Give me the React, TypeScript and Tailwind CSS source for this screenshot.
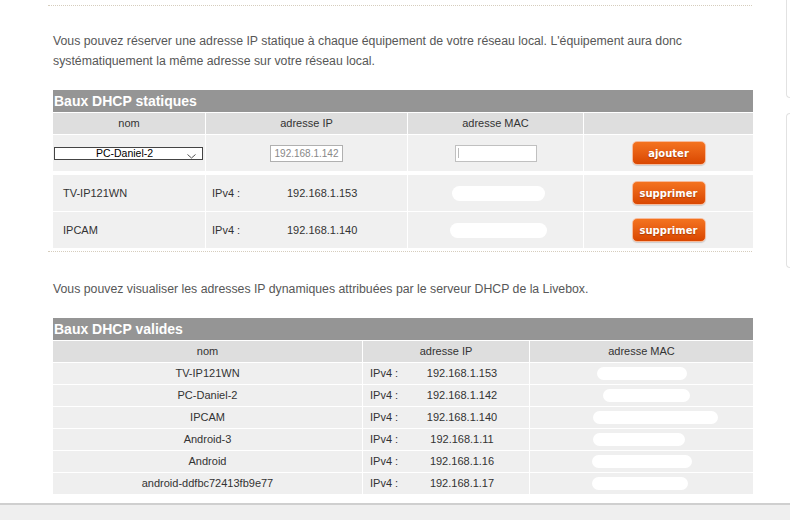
import React from "react";

const staticLeases = [
  { name: "TV-IP121WN", ip: "192.168.1.153", mac: "ml-[44px] w-[93px]" },
  { name: "IPCAM", ip: "192.168.1.140", mac: "ml-[42px] w-[97px]" },
];

const validLeases = [
  { name: "TV-IP121WN", ip: "192.168.1.153", mac: "ml-[67px] w-[90px]" },
  { name: "PC-Daniel-2", ip: "192.168.1.142", mac: "ml-[73px] w-[87px]" },
  { name: "IPCAM", ip: "192.168.1.140", mac: "ml-[63px] w-[125px]" },
  { name: "Android-3", ip: "192.168.1.11", mac: "ml-[63px] w-[92px]" },
  { name: "Android", ip: "192.168.1.16", mac: "ml-[62px] w-[100px]" },
  { name: "android-ddfbc72413fb9e77", ip: "192.168.1.17", mac: "ml-[62px] w-[96px]" },
];

function OrangeButton({ label }: { label: string }) {
  return (
    <button className="w-[74px] h-[24px] rounded-[5px] border border-[#f6bb9c] bg-gradient-to-b from-[#f4731f] to-[#d94600] text-white font-['DejaVu_Sans',sans-serif] font-bold text-[10px] [text-shadow:0_1px_1px_rgba(120,40,0,0.5)] shadow-[0_1px_1px_rgba(0,0,0,0.15)]">
      {label}
    </button>
  );
}

function App() {
  return (
    <div className="w-full h-[520px] bg-white flex flex-col overflow-hidden font-['Liberation_Sans',Arial,sans-serif]">
      <div className="flex-1 flex">
        {/* Main content */}
        <div className="pl-[53px] w-[753px] shrink-0 flex flex-col">
          <div className="mt-[5px] -ml-[5px] w-[704px] border-t border-dotted border-[#d6cdbd]" />

          <p className="mt-[25px] text-[12.3px] leading-[20px] text-[#575757]">
            Vous pouvez réserver une adresse IP statique à chaque équipement de votre réseau local. L'équipement aura donc
            <br />
            systématiquement la même adresse sur votre réseau local.
          </p>

          {/* Baux DHCP statiques */}
          <div className="mt-[19px] h-[22px] bg-[#959595] text-white font-bold text-[14px] leading-[22px] pl-px">
            Baux DHCP statiques
          </div>
          <div className="mt-px grid grid-cols-[152px_201px_175px_169px] gap-x-px text-[11px] text-[#333]">
            <div className="h-[21px] bg-[#dedede] flex items-center justify-center">nom</div>
            <div className="h-[21px] bg-[#dedede] flex items-center justify-center">adresse IP</div>
            <div className="h-[21px] bg-[#dedede] flex items-center justify-center">adresse MAC</div>
            <div className="h-[21px] bg-[#dedede]" />
          </div>
          <div className="mt-px grid grid-cols-[152px_201px_175px_169px] gap-x-px text-[11px] text-[#333]">
            <div className="h-[36px] bg-[#f0f0f0] flex items-center pl-px">
              <div className="w-[149px] h-[13px] bg-white border border-[#444] relative flex items-center justify-center text-[10.5px] text-black leading-none">
                <span className="-ml-[8px]">PC-Daniel-2</span>
                <svg className="absolute right-[6px] top-[6px]" width="9" height="5" viewBox="0 0 9 5">
                  <polyline points="0.5,0.5 4.5,4 8.5,0.5" fill="none" stroke="#555" strokeWidth="1" />
                </svg>
              </div>
            </div>
            <div className="h-[36px] bg-[#f0f0f0] flex items-center justify-center">
              <div className="w-[73px] h-[17px] bg-white border border-[#b0b0b0] flex items-center justify-center text-[10px] text-[#888]">
                192.168.1.142
              </div>
            </div>
            <div className="h-[36px] bg-[#f0f0f0] flex items-center justify-center">
              <div className="w-[82px] h-[17px] bg-white border border-[#c0c0c0] flex items-center pl-[2px]">
                <div className="w-px h-[10px] bg-[#bbb]" />
              </div>
            </div>
            <div className="h-[36px] bg-[#f0f0f0] flex items-center justify-center">
              <OrangeButton label="ajouter" />
            </div>
          </div>

          <div className="mt-[4px] flex flex-col gap-y-px">
            {staticLeases.map((lease) => (
              <div key={lease.name} className="grid grid-cols-[152px_201px_175px_169px] gap-x-px text-[11px] text-[#333]">
                <div className="h-[36px] bg-[#f0f0f0] flex items-center pl-[10px]">{lease.name}</div>
                <div className="h-[36px] bg-[#f0f0f0] flex items-center pl-[6px]">
                  <span className="w-[75px]">IPv4 :</span>
                  <span>{lease.ip}</span>
                </div>
                <div className="h-[36px] bg-[#f0f0f0] flex items-center">
                  <div className={`${lease.mac} h-[15px] rounded-full bg-white blur-[0.5px]`} />
                </div>
                <div className="h-[36px] bg-[#f0f0f0] flex items-center justify-center">
                  <OrangeButton label="supprimer" />
                </div>
              </div>
            ))}
          </div>

          <div className="mt-[3px] -ml-[5px] w-[704px] border-t border-dotted border-[#d6cdbd]" />

          <p className="mt-[27px] text-[12.3px] leading-[20px] text-[#575757]">
            Vous pouvez visualiser les adresses IP dynamiques attribuées par le serveur DHCP de la Livebox.
          </p>

          {/* Baux DHCP valides */}
          <div className="mt-[19px] h-[22px] bg-[#959595] text-white font-bold text-[14px] leading-[22px] pl-px">
            Baux DHCP valides
          </div>
          <div className="mt-px grid grid-cols-[309px_166px_223px] gap-x-px text-[11px] text-[#333]">
            <div className="h-[21px] bg-[#dedede] flex items-center justify-center">nom</div>
            <div className="h-[21px] bg-[#dedede] flex items-center justify-center">adresse IP</div>
            <div className="h-[21px] bg-[#dedede] flex items-center justify-center">adresse MAC</div>
          </div>
          {validLeases.map((lease) => (
            <div key={lease.name} className="mt-px grid grid-cols-[309px_166px_223px] gap-x-px text-[11px] text-[#333]">
              <div className="h-[21px] bg-[#efefef] flex items-center justify-center">{lease.name}</div>
              <div className="h-[21px] bg-[#efefef] flex items-center">
                <span className="w-[32px] pl-[7px] shrink-0 whitespace-nowrap">IPv4 :</span>
                <span className="flex-1 text-center">{lease.ip}</span>
              </div>
              <div className="h-[21px] bg-[#efefef] flex items-center">
                <div className={`${lease.mac} h-[13px] rounded-full bg-white blur-[0.5px]`} />
              </div>
            </div>
          ))}
        </div>

        {/* Sidebar edge */}
        <div className="ml-[33px] flex-1 flex flex-col">
          <div className="-mt-[10px] h-[108px] rounded-bl-[6px] border-l border-b border-[#e2e2e2]" />
          <div className="mt-[15px] h-[155px] rounded-l-[6px] border-l border-y border-[#e2e2e2]" />
        </div>
      </div>

      {/* Footer strip */}
      <div className="h-[17px] border-t-2 border-[#cfcfcf] bg-[#efefef]" />
    </div>
  );
}

export default App;
